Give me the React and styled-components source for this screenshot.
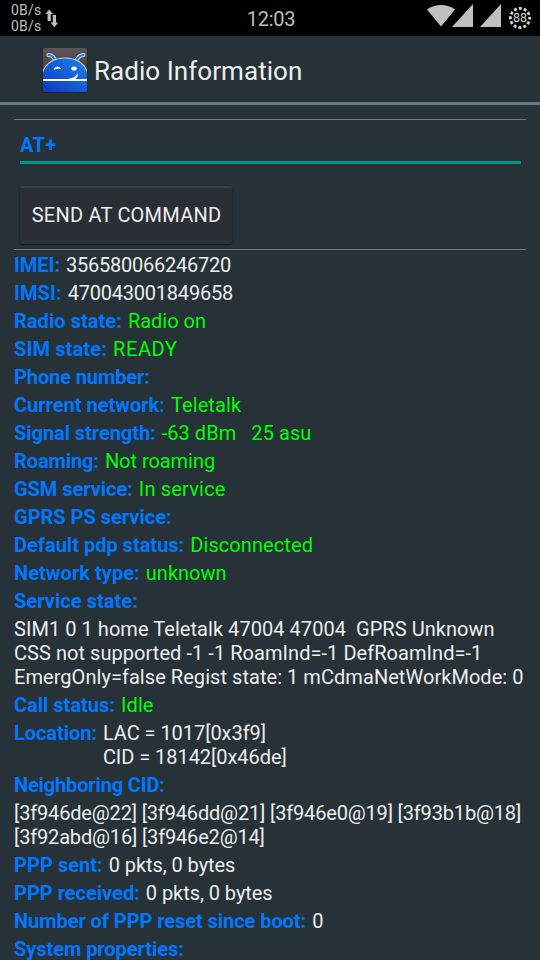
import styled, { createGlobalStyle } from 'styled-components'

// ls / vs: label and value letter spacing
const rows = [
  { label: 'IMEI:', value: '356580066246720', vs: -0.25 },
  { label: 'IMSI:', value: '470043001849658', ls: 0.1, vs: -0.22 },
  { label: 'Radio state:', value: 'Radio on', ls: 0.05, green: true },
  { label: 'SIM state:', value: 'READY', ls: 0.13, vs: 0.65, green: true },
  { label: 'Phone number:', ls: -0.1 },
  { label: 'Current network:', value: 'Teletalk', vs: 0.1, green: true },
  { label: 'Signal strength:', value: '-63 dBm   25 asu', ls: -0.05, vs: 0.06, green: true },
  { label: 'Roaming:', value: 'Not roaming', ls: -0.1, vs: -0.05, green: true },
  { label: 'GSM service:', value: 'In service', ls: -0.04, vs: 0.18, green: true },
  { label: 'GPRS PS service:' },
  { label: 'Default pdp status:', value: 'Disconnected', vs: 0.08, green: true },
  { label: 'Network type:', value: 'unknown', ls: 0.05, green: true },
  { label: 'Service state:', ls: 0.05 },
  { value: 'SIM1 0 1 home Teletalk 47004 47004  GPRS Unknown\nCSS not supported -1 -1 RoamInd=-1 DefRoamInd=-1\nEmergOnly=false Regist state: 1 mCdmaNetWorkMode: 0', vs: 0.05 },
  { label: 'Call status:', value: 'Idle', vs: 0.1, green: true },
  { label: 'Location:', value: 'LAC = 1017[0x3f9]\nCID = 18142[0x46de]', ls: -0.06, vs: -0.05 },
  { label: 'Neighboring CID:', ls: -0.15 },
  { value: '[3f946de@22] [3f946dd@21] [3f946e0@19] [3f93b1b@18]\n[3f92abd@16] [3f946e2@14]', vs: -0.165 },
  { label: 'PPP sent:', value: '0 pkts, 0 bytes', ls: 0.05, vs: -0.07 },
  { label: 'PPP received:', value: '0 pkts, 0 bytes', vs: -0.05 },
  { label: 'Number of PPP reset since boot:', value: '0', ls: -0.06 },
  { label: 'System properties:', ls: -0.05 },
]

function TrafficArrows() {
  return (
    <svg width="14" height="20" viewBox="0 0 14 20" fill="#bebebe">
      <path d="M4.2 1.5L8 6H5.8V13H2.6V6H0.4Z" />
      <path d="M9.4 19.2L5.6 14.6H7.8V7H11V14.6H13.2Z" />
    </svg>
  )
}

function StatusIcons() {
  return (
    <svg width="106" height="36" viewBox="0 0 106 36" fill="#c0c0c0">
      <path d="M0 9.5Q6 5 14 5Q22 5 28 9.5L14 26.5Z" />
      <path d="M46 4V27H25Z" />
      <path d="M74 4V27H53Z" />
      <circle cx="93" cy="18" r="9.6" fill="none" stroke="#d6d6d6" strokeWidth="2.8" strokeDasharray="3 2.027" strokeDashoffset="1.5" />
      <BatteryText x="93" y="22.3" textAnchor="middle">88</BatteryText>
    </svg>
  )
}

function AppIcon() {
  return (
    <svg width="46" height="46" viewBox="0 0 46 46">
      <defs>
        <linearGradient id="tile" x1="0" y1="0" x2="0" y2="1">
          <stop offset="0" stopColor="#5b5757" />
          <stop offset="1" stopColor="#292625" />
        </linearGradient>
        <linearGradient id="body" x1="0" y1="1" x2="1" y2="0">
          <stop offset="0" stopColor="#0d35c4" />
          <stop offset="1" stopColor="#1c83e6" />
        </linearGradient>
        <clipPath id="clip">
          <rect x="1" y="1" width="44" height="44" rx="1.5" />
        </clipPath>
      </defs>
      <rect x="0.5" y="1" width="45" height="45" rx="2" fill="#1a2226" />
      <g clipPath="url(#clip)">
        <rect x="1" y="1" width="44" height="44" fill="url(#tile)" />
        <path d="M6.5 8Q11 8 13.5 14M41.5 8Q37 8 34 14" fill="none" stroke="#cfdcec" strokeWidth="4" strokeLinecap="round" />
        <path d="M6.5 8Q11 8 13.5 14M41.5 8Q37 8 34 14" fill="none" stroke="#2277d6" strokeWidth="2" strokeLinecap="round" />
        <path d="M0 46V27Q2 19 9 14.5Q15 11 23 11Q31 11 37 14.5Q44 19 46 27V46Z" fill="url(#body)" stroke="#c3cfdf" strokeWidth="1.2" />
        <path d="M0 32H26Q33 31 35.5 26.5Q36.5 30 33.5 32H46V34H0Z" fill="#fff" />
        <path d="M12 21.5Q15.5 18.5 19 21.5Q15 21 12 22.3Z" fill="#fff" stroke="#fff" strokeWidth="0.7" />
        <ellipse cx="32" cy="21.5" rx="2.8" ry="2" fill="#fff" />
      </g>
    </svg>
  )
}

export default function App() {
  return (
    <>
      <GlobalStyle />
      <Screen>
        <StatusBar>
          <Traffic>
            <Speed>
              <div>0B/s</div>
              <div>0B/s</div>
            </Speed>
            <TrafficArrows />
          </Traffic>
          <Clock>12:03</Clock>
          <StatusIcons />
        </StatusBar>
        <Header>
          <AppIcon />
          <Title>Radio Information</Title>
        </Header>
        <Content>
          <Divider />
          <CommandInput defaultValue="AT+" />
          <SendButton>SEND AT COMMAND</SendButton>
          <Divider />
          <InfoList>
            {rows.map((row, i) => (
              <InfoRow key={i}>
                {row.label && <Label $spacing={row.ls}>{row.label}</Label>}
                {row.value && <Value $green={row.green} $spacing={row.vs}>{row.value}</Value>}
              </InfoRow>
            ))}
          </InfoList>
        </Content>
      </Screen>
    </>
  )
}

const GlobalStyle = createGlobalStyle`
  body {
    margin: 0;
    background: #263238;
    overflow: hidden;
  }
  * {
    box-sizing: border-box;
  }
`

const Screen = styled.div`
  width: 540px;
  height: 960px;
  overflow: hidden;
  background: #263238;
  color: #eeeeee;
  font-family: Roboto, sans-serif;
  font-size: 20px;
`

const StatusBar = styled.div`
  display: grid;
  grid-template-columns: 1fr auto 1fr;
  align-items: center;
  height: 36px;
  padding: 0 7px 0 11px;
  background: #000;
  color: #bebebe;
  & > svg {
    justify-self: end;
  }
`

const Traffic = styled.div`
  display: flex;
  align-items: center;
  gap: 3px;
`

const Speed = styled.div`
  font-size: 14px;
  line-height: 16px;
  letter-spacing: 0.25px;
`

const Clock = styled.div`
  margin-right: 2px;
  padding-top: 2px;
  font-size: 20px;
  letter-spacing: -0.3px;
`

const BatteryText = styled.text`
  fill: #d6d6d6;
  font-size: 12.5px;
`

const Header = styled.div`
  display: flex;
  align-items: center;
  gap: 6px;
  height: 69px;
  padding: 2px 0 0 42px;
  border-bottom: 3px solid #607d8b;
`

const Title = styled.div`
  padding-top: 2px;
  font-size: 26px;
  line-height: 32px;
  letter-spacing: 0.05px;
`

const Content = styled.div`
  padding: 14px 14px 0;
`

const Divider = styled.div`
  height: 1px;
  background: #757a7a;
`

const CommandInput = styled.input`
  display: block;
  width: 501px;
  height: 44px;
  margin-left: 6px;
  padding: 8px 0 0;
  border: 0;
  border-bottom: 3px solid #009688;
  outline: none;
  background: transparent;
  color: #0077ff;
  font: bold 20px Roboto, sans-serif;
  letter-spacing: 0.3px;
`

const SendButton = styled.button`
  display: block;
  width: 212px;
  height: 58px;
  margin: 22px 0 5px 6px;
  padding: 0 0 2px 1px;
  border: 0;
  border-top: 2px solid #3a4144;
  border-radius: 2px;
  background: #292f35;
  box-shadow: 0 1px 2px #12181b;
  color: #eeeeee;
  font: 20px Roboto, sans-serif;
  letter-spacing: 0.22px;
`

const InfoList = styled.div`
  display: flex;
  flex-direction: column;
  gap: 4px;
  padding-top: 3px;
`

const InfoRow = styled.div`
  display: flex;
  gap: 6px;
  line-height: 24px;
  white-space: pre;
`

const Label = styled.div`
  color: #0077ff;
  font-weight: bold;
  letter-spacing: ${(props) => props.$spacing || 0}px;
`

const Value = styled.div`
  color: ${(props) => (props.$green ? '#00ff00' : '#eeeeee')};
  letter-spacing: ${(props) => props.$spacing || 0}px;
`
